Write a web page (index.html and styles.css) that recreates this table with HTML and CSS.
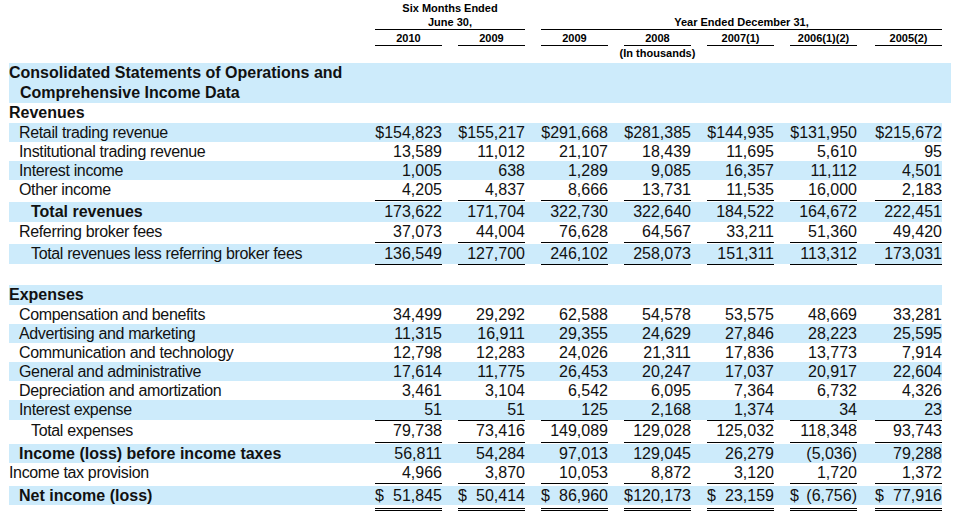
FILE: index.html
```html
<!DOCTYPE html>
<html>
<head>
<meta charset="utf-8">
<link rel="stylesheet" href="styles.css">
</head>
<body>
<div class="sheet">
  <div class="row hdr1">
    <div></div>
    <div class="span2 hline">Six Months Ended<br>June 30,</div>
    <div class="span5 hline">Year Ended December 31,</div>
  </div>
  <div class="row hdr2">
    <div></div>
    <div class="yr">2010</div><div class="yr">2009</div><div class="yr">2009</div><div class="yr">2008</div><div class="yr">2007(1)</div><div class="yr">2006(1)(2)</div><div class="yr">2005(2)</div>
  </div>
  <div class="row hdr3">
    <div></div><div></div><div></div><div></div>
    <div class="units">(In thousands)</div>
  </div>

  <div class="row blue title">
    <div class="lbl b">Consolidated Statements of Operations and<br><span class="i1">Comprehensive Income Data</span></div>
  </div>
  <div class="row h20"><div class="lbl b">Revenues</div></div>
  <div class="row blue">
    <div class="lbl i1">Retail trading revenue</div>
    <div class="n">$154,823</div><div class="n">$155,217</div><div class="n">$291,668</div><div class="n">$281,385</div><div class="n">$144,935</div><div class="n">$131,950</div><div class="n">$215,672</div>
  </div>
  <div class="row">
    <div class="lbl i1">Institutional trading revenue</div>
    <div class="n">13,589</div><div class="n">11,012</div><div class="n">21,107</div><div class="n">18,439</div><div class="n">11,695</div><div class="n">5,610</div><div class="n">95</div>
  </div>
  <div class="row blue">
    <div class="lbl i1">Interest income</div>
    <div class="n">1,005</div><div class="n">638</div><div class="n">1,289</div><div class="n">9,085</div><div class="n">16,357</div><div class="n">11,112</div><div class="n">4,501</div>
  </div>
  <div class="row h20 ul">
    <div class="lbl i1">Other income</div>
    <div class="n">4,205</div><div class="n">4,837</div><div class="n">8,666</div><div class="n">13,731</div><div class="n">11,535</div><div class="n">16,000</div><div class="n">2,183</div>
  </div>
  <div class="row blue h20">
    <div class="lbl b i2">Total revenues</div>
    <div class="n">173,622</div><div class="n">171,704</div><div class="n">322,730</div><div class="n">322,640</div><div class="n">184,522</div><div class="n">164,672</div><div class="n">222,451</div>
  </div>
  <div class="row h20 ul">
    <div class="lbl i1">Referring broker fees</div>
    <div class="n">37,073</div><div class="n">44,004</div><div class="n">76,628</div><div class="n">64,567</div><div class="n">33,211</div><div class="n">51,360</div><div class="n">49,420</div>
  </div>
  <div class="row blue h20 ul last-rev">
    <div class="lbl i2">Total revenues less referring broker fees</div>
    <div class="n">136,549</div><div class="n">127,700</div><div class="n">246,102</div><div class="n">258,073</div><div class="n">151,311</div><div class="n">113,312</div><div class="n">173,031</div>
  </div>

  <div class="row blue h20"><div class="lbl b">Expenses</div></div>
  <div class="row">
    <div class="lbl i1">Compensation and benefits</div>
    <div class="n">34,499</div><div class="n">29,292</div><div class="n">62,588</div><div class="n">54,578</div><div class="n">53,575</div><div class="n">48,669</div><div class="n">33,281</div>
  </div>
  <div class="row blue">
    <div class="lbl i1">Advertising and marketing</div>
    <div class="n">11,315</div><div class="n">16,911</div><div class="n">29,355</div><div class="n">24,629</div><div class="n">27,846</div><div class="n">28,223</div><div class="n">25,595</div>
  </div>
  <div class="row">
    <div class="lbl i1">Communication and technology</div>
    <div class="n">12,798</div><div class="n">12,283</div><div class="n">24,026</div><div class="n">21,311</div><div class="n">17,836</div><div class="n">13,773</div><div class="n">7,914</div>
  </div>
  <div class="row blue">
    <div class="lbl i1">General and administrative</div>
    <div class="n">17,614</div><div class="n">11,775</div><div class="n">26,453</div><div class="n">20,247</div><div class="n">17,037</div><div class="n">20,917</div><div class="n">22,604</div>
  </div>
  <div class="row">
    <div class="lbl i1">Depreciation and amortization</div>
    <div class="n">3,461</div><div class="n">3,104</div><div class="n">6,542</div><div class="n">6,095</div><div class="n">7,364</div><div class="n">6,732</div><div class="n">4,326</div>
  </div>
  <div class="row blue h20 ul nogap">
    <div class="lbl i1">Interest expense</div>
    <div class="n">51</div><div class="n">51</div><div class="n">125</div><div class="n">2,168</div><div class="n">1,374</div><div class="n">34</div><div class="n">23</div>
  </div>
  <div class="row h22 ul">
    <div class="lbl i2">Total expenses</div>
    <div class="n">79,738</div><div class="n">73,416</div><div class="n">149,089</div><div class="n">129,028</div><div class="n">125,032</div><div class="n">118,348</div><div class="n">93,743</div>
  </div>
  <div class="row blue">
    <div class="lbl b i1">Income (loss) before income taxes</div>
    <div class="n">56,811</div><div class="n">54,284</div><div class="n">97,013</div><div class="n">129,045</div><div class="n">26,279</div><div class="n">(5,036)</div><div class="n">79,288</div>
  </div>
  <div class="row h20 ul tax">
    <div class="lbl">Income tax provision</div>
    <div class="n">4,966</div><div class="n">3,870</div><div class="n">10,053</div><div class="n">8,872</div><div class="n">3,120</div><div class="n">1,720</div><div class="n">1,372</div>
  </div>
  <div class="row blue net">
    <div class="lbl b i1">Net income (loss)</div>
    <div class="n d"><span>$</span><span>51,845</span></div>
    <div class="n d"><span>$</span><span>50,414</span></div>
    <div class="n d"><span>$</span><span>86,960</span></div>
    <div class="n d"><span>$</span><span>120,173</span></div>
    <div class="n d"><span>$</span><span>23,159</span></div>
    <div class="n d"><span>$</span><span>(6,756)</span></div>
    <div class="n d"><span>$</span><span>77,916</span></div>
  </div>
</div>
</body>
</html>
```

FILE: styles.css
```css
html, body {
  margin: 0;
  padding: 0;
  background: #ffffff;
}

body {
  font-family: "Liberation Sans", Arial, sans-serif;
  color: #111111;
  width: 956px;
  height: 512px;
  overflow: hidden;
}

.sheet {
  padding: 1px 0 0 9px;
}

.row {
  display: grid;
  grid-template-columns: 350px repeat(6, 67px) 69px;
  column-gap: 16px;
  width: 933px;
  height: 19px;
  font-size: 16px;
  line-height: 19px;
}

.row > :nth-child(8) {
  margin-left: 2px;
}

.blue {
  background: #cdebfb;
}

.h20 { height: 20px; line-height: 20px; }
.h22 { height: 22px; line-height: 22px; }

/* header */
.hdr1, .hdr2, .hdr3 {
  font-size: 11px;
  font-weight: bold;
  line-height: 14px;
  height: auto;
  text-align: center;
  color: #000;
  white-space: nowrap;
}

.span2 {
  grid-column: 2 / 4;
}

.span5 {
  grid-column: 4 / 9;
  align-self: end;
  margin-left: 0 !important;
}

.hline {
  border-bottom: 1px solid #000;
}

.yr {
  border-bottom: 1px solid #000;
  height: 14px;
}

.hdr2 {
  padding-top: 1px;
}

.units {
  grid-column: 5;
  white-space: nowrap;
  justify-self: center;
}

.title {
  margin-top: 3px;
  width: 942px;
  height: 40px;
  line-height: 20px;
}

/* labels */
.lbl {
  white-space: nowrap;
  letter-spacing: -0.35px;
}

.lbl.b {
  font-weight: bold;
  letter-spacing: 0;
}

.i1 { padding-left: 10px; }
.i2 { padding-left: 22px; }
.title .i1 { padding-left: 11px; }

/* numbers */
.n {
  text-align: right;
  white-space: nowrap;
}

.ul .n {
  border-bottom: 1px solid #000;
}

.ul {
  margin-bottom: 2px;
}

.ul.nogap {
  margin-bottom: 0;
}

.last-rev {
  margin-bottom: 21px;
}

.tax {
  margin-bottom: 3px;
}

.net .d {
  display: flex;
  justify-content: space-between;
  align-self: start;
  height: 25px;
  border-bottom: 3px double #000;
  box-sizing: border-box;
  padding-bottom: 2px;
}
```
